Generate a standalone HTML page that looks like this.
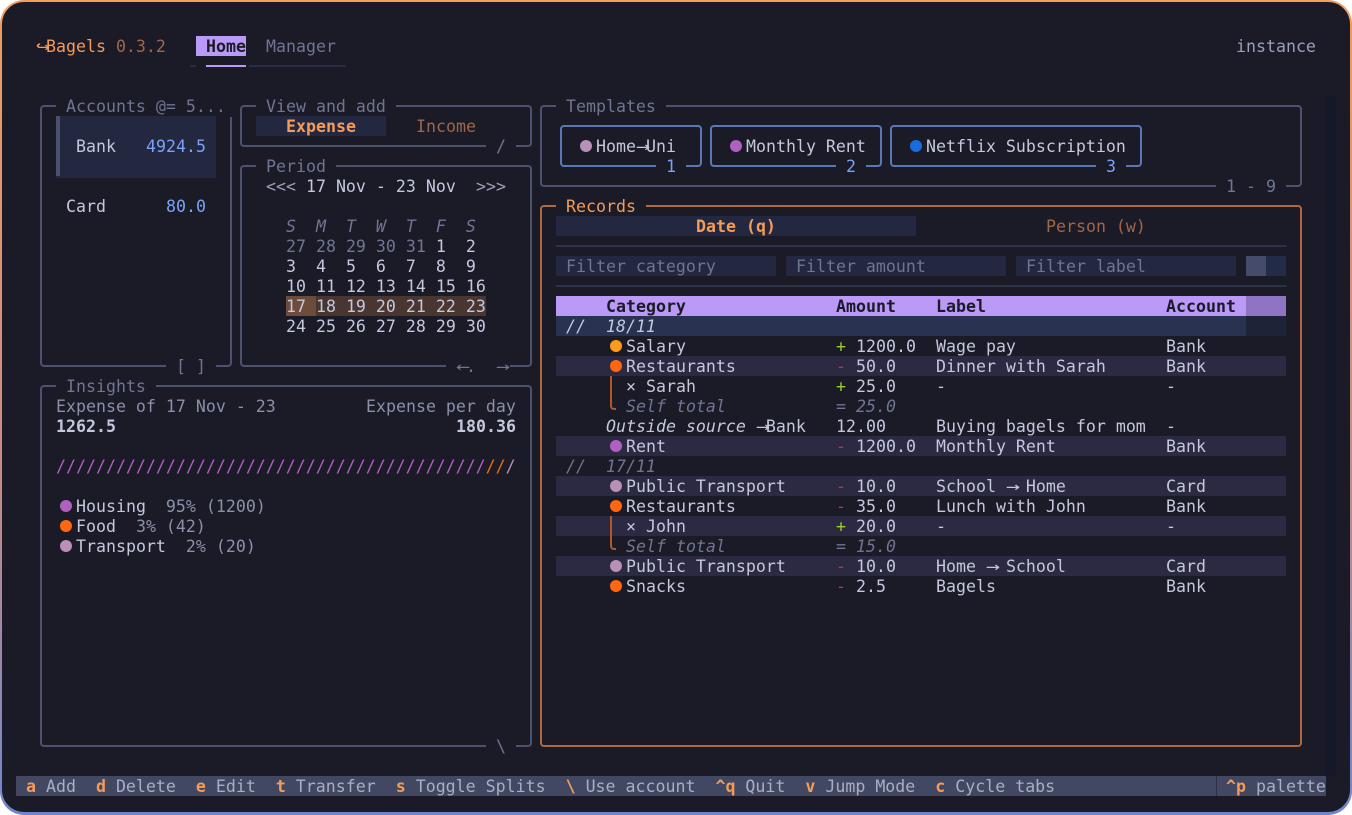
<!DOCTYPE html>
<html><head><meta charset="utf-8"><style>
*{margin:0;padding:0;box-sizing:border-box}
body{width:1352px;height:815px;background:#fff;overflow:hidden;position:relative;font-family:"DejaVu Sans Mono","Liberation Mono",monospace;font-size:16.6px;line-height:20px;color:#c3c8dc}
#win{position:absolute;left:0;top:0;width:1352px;height:815px;border-radius:24px;background:linear-gradient(#f39c5c,#c58a88 60%,#6f86cc)}
#in{position:absolute;left:2px;top:2px;right:2px;bottom:3px;border-radius:22px;background:#1b1b27}
.t{position:absolute;white-space:pre;height:20px;padding-top:1px}
.box{position:absolute;border:2px solid #4c5270;border-radius:4px}
.ob{border-color:#b0683e}
.lbl{position:absolute;white-space:pre;background:#1b1b27;padding:1px 10px 0;color:#6f7592}
.dim{color:#6f7592}
.or{color:#f49b5a}
.dor{color:#a0664a}
.bl{color:#7aa2f7}
.b{font-weight:bold}
.i{font-style:italic}
.bg{position:absolute}
.d{position:absolute;width:12px;height:12px;border-radius:50%}
.red{color:#d0285a}.grn{color:#9acd32}
.ar{display:inline-block;width:10px;transform:scaleX(1.4);transform-origin:left center}
</style></head><body>
<div id="win"></div><div id="in"></div>

<div class="t or" style="left:36px;top:36px"><span class="ar">↪</span>Bagels <span class="dor">0.3.2</span></div>
<div class="bg" style="left:196px;top:36px;width:50px;height:20px;background:#bb9af7"></div>
<div class="t b" style="left:206px;top:36px;color:#1b1b27">Home</div>
<div class="t dim" style="left:266px;top:36px">Manager</div>
<div class="bg" style="left:190px;top:65px;width:6px;height:2px;background:#2a2d40"></div>
<div class="bg" style="left:206px;top:65px;width:40px;height:2px;background:#bb9af7"></div>
<div class="bg" style="left:249px;top:65px;width:97px;height:2px;background:#2a2d40"></div>
<div class="t" style="left:1236px;top:36px;color:#9aa0b8">instance</div>

<div class="bg" style="left:1326px;top:96px;width:10px;height:680px;background:#151828"></div>

<div class="box" style="left:40px;top:105px;width:192px;height:262px"></div>
<div class="lbl" style="left:56px;top:96px">Accounts @= 5...</div>
<div class="bg" style="left:56px;top:116px;width:160px;height:62px;background:#232840"></div>
<div class="bg" style="left:56px;top:116px;width:4px;height:60px;background:#4a5070"></div>
<div class="t" style="left:76px;top:136px">Bank</div>
<div class="t bl" style="left:146px;top:136px">4924.5</div>
<div class="t" style="left:66px;top:196px">Card</div>
<div class="t bl" style="left:166px;top:196px">80.0</div>
<div class="lbl" style="left:166px;top:356px">[ ]</div>

<div class="box" style="left:240px;top:105px;width:292px;height:42px"></div>
<div class="lbl" style="left:256px;top:96px">View and add</div>
<div class="bg" style="left:256px;top:116px;width:130px;height:20px;background:#232840"></div>
<div class="t or b" style="left:286px;top:116px">Expense</div>
<div class="t dor" style="left:416px;top:116px">Income</div>
<div class="lbl" style="left:486px;top:136px">/</div>

<div class="box" style="left:240px;top:165px;width:292px;height:202px"></div>
<div class="lbl" style="left:256px;top:156px">Period</div>
<div class="t" style="left:266px;top:176px"><span style="color:#9aa0b8">&lt;&lt;&lt;</span> 17 Nov - 23 Nov</div>
<div class="t" style="left:476px;top:176px;color:#9aa0b8">&gt;&gt;&gt;</div>
<div class="t i dim" style="left:286px;top:216px">S  M  T  W  T  F  S</div>
<div class="t" style="left:286px;top:236px"><span class="dim">27 28 29 30 31</span> 1  2</div>
<div class="t" style="left:286px;top:256px">3  4  5  6  7  8  9</div>
<div class="t" style="left:286px;top:276px">10 11 12 13 14 15 16</div>
<div class="bg" style="left:286px;top:296px;width:200px;height:20px;background:#4a3630"></div>
<div class="bg" style="left:286px;top:296px;width:30px;height:20px;background:#6e4c3c"></div>
<div class="t" style="left:286px;top:296px">17 18 19 20 21 22 23</div>
<div class="t" style="left:286px;top:316px">24 25 26 27 28 29 30</div>
<div class="lbl" style="left:446px;top:356px;padding:1px 4px 0 10px"><span class="ar">←</span>. </div>
<div class="lbl" style="left:486px;top:356px;padding:1px 4px 0 10px"><span class="ar">→</span></div>

<div class="box" style="left:40px;top:385px;width:492px;height:362px"></div>
<div class="lbl" style="left:56px;top:376px">Insights</div>
<div class="t" style="left:56px;top:396px;color:#8a90a8">Expense of 17 Nov - 23</div>
<div class="t" style="left:366px;top:396px;color:#8a90a8">Expense per day</div>
<div class="t b" style="left:56px;top:416px">1262.5</div>
<div class="t b" style="left:456px;top:416px">180.36</div>
<div class="t" style="left:56px;top:456px;color:#b060c0">///////////////////////////////////////////<span style="color:#f06a10">//</span><span style="color:#b890b8">/</span></div>
<div class="d" style="left:60px;top:500px;background:#b060c0"></div>
<div class="t" style="left:76px;top:496px">Housing  <span style="color:#8a90a8">95% (1200)</span></div>
<div class="d" style="left:60px;top:520px;background:#ff6610"></div>
<div class="t" style="left:76px;top:516px">Food  <span style="color:#8a90a8">3% (42)</span></div>
<div class="d" style="left:60px;top:540px;background:#b890b8"></div>
<div class="t" style="left:76px;top:536px">Transport  <span style="color:#8a90a8">2% (20)</span></div>
<div class="lbl" style="left:486px;top:736px">\</div>

<div class="box" style="left:540px;top:105px;width:762px;height:82px"></div>
<div class="lbl" style="left:556px;top:96px">Templates</div>
<div class="box" style="left:560px;top:125px;width:142px;height:42px;border-color:#5a78b8"></div>
<div class="box" style="left:710px;top:125px;width:172px;height:42px;border-color:#5a78b8"></div>
<div class="box" style="left:890px;top:125px;width:252px;height:42px;border-color:#5a78b8"></div>
<div class="d" style="left:580px;top:140px;background:#b890b8"></div>
<div class="t" style="left:596px;top:136px">Home<span class="ar">→</span>Uni</div>
<div class="d" style="left:730px;top:140px;background:#b060c0"></div>
<div class="t" style="left:746px;top:136px">Monthly Rent</div>
<div class="d" style="left:910px;top:140px;background:#1a6ae0"></div>
<div class="t" style="left:926px;top:136px">Netflix Subscription</div>
<div class="lbl" style="left:656px;top:156px;color:#7aa2f7">1</div>
<div class="lbl" style="left:836px;top:156px;color:#7aa2f7">2</div>
<div class="lbl" style="left:1096px;top:156px;color:#7aa2f7">3</div>
<div class="lbl" style="left:1216px;top:176px">1 - 9</div>

<div class="box ob" style="left:540px;top:205px;width:762px;height:542px"></div>
<div class="lbl or" style="left:556px;top:196px;color:#f49b5a">Records</div>
<div class="bg" style="left:556px;top:216px;width:360px;height:20px;background:#232840"></div>
<div class="t or b" style="left:696px;top:216px">Date (q)</div>
<div class="t dor" style="left:1046px;top:216px">Person (w)</div>
<div class="bg" style="left:556px;top:245px;width:730px;height:2px;background:#2e3248"></div>
<div class="bg" style="left:556px;top:256px;width:220px;height:20px;background:#232840"></div>
<div class="bg" style="left:786px;top:256px;width:220px;height:20px;background:#232840"></div>
<div class="bg" style="left:1016px;top:256px;width:220px;height:20px;background:#232840"></div>
<div class="bg" style="left:1246px;top:256px;width:20px;height:20px;background:#454b6a"></div>
<div class="bg" style="left:1266px;top:256px;width:20px;height:20px;background:#222c48"></div>
<div class="t dim" style="left:566px;top:256px">Filter category</div>
<div class="t dim" style="left:796px;top:256px">Filter amount</div>
<div class="t dim" style="left:1026px;top:256px">Filter label</div>
<div class="bg" style="left:556px;top:285px;width:730px;height:2px;background:#2e3248"></div>
<div class="bg" style="left:556px;top:296px;width:690px;height:20px;background:#bb9af7"></div>
<div class="bg" style="left:1246px;top:296px;width:40px;height:20px;background:#8f74c4"></div>
<div class="t b" style="left:606px;top:296px;color:#1b1b27">Category</div>
<div class="t b" style="left:836px;top:296px;color:#1b1b27">Amount</div>
<div class="t b" style="left:936px;top:296px;color:#1b1b27">Label</div>
<div class="t b" style="left:1166px;top:296px;color:#1b1b27">Account</div>
<div class="bg" style="left:556px;top:316px;width:690px;height:20px;background:#293250"></div>
<div class="bg" style="left:1246px;top:316px;width:40px;height:20px;background:#1e2438"></div>
<div class="t i" style="left:566px;top:316px">//  18/11</div>

<div class="bg" style="left:556px;top:356px;width:730px;height:20px;background:#2b2a42"></div>
<div class="bg" style="left:556px;top:436px;width:730px;height:20px;background:#2b2a42"></div>
<div class="bg" style="left:556px;top:476px;width:730px;height:20px;background:#2b2a42"></div>
<div class="bg" style="left:556px;top:516px;width:730px;height:20px;background:#2b2a42"></div>
<div class="bg" style="left:556px;top:556px;width:730px;height:20px;background:#2b2a42"></div>

<div class="bg" style="left:610px;top:376px;width:6px;height:34px;border-left:2px solid #b0582a;border-bottom:2px solid #b0582a;border-bottom-left-radius:4px"></div>
<div class="bg" style="left:610px;top:516px;width:6px;height:34px;border-left:2px solid #b0582a;border-bottom:2px solid #b0582a;border-bottom-left-radius:4px"></div>

<div class="d" style="left:610px;top:340px;background:#ff9a1a"></div>
<div class="t" style="left:626px;top:336px">Salary</div>
<div class="t" style="left:836px;top:336px"><span class="grn">+</span> 1200.0</div>
<div class="t" style="left:936px;top:336px">Wage pay</div><div class="t" style="left:1166px;top:336px">Bank</div>

<div class="d" style="left:610px;top:360px;background:#ff6610"></div>
<div class="t" style="left:626px;top:356px">Restaurants</div>
<div class="t" style="left:836px;top:356px"><span class="red">-</span> 50.0</div>
<div class="t" style="left:936px;top:356px">Dinner with Sarah</div><div class="t" style="left:1166px;top:356px">Bank</div>

<div class="t" style="left:626px;top:376px">× Sarah</div>
<div class="t" style="left:836px;top:376px"><span class="grn">+</span> 25.0</div>
<div class="t" style="left:936px;top:376px">-</div><div class="t" style="left:1166px;top:376px">-</div>

<div class="t i dim" style="left:626px;top:396px">Self total</div>
<div class="t i dim" style="left:836px;top:396px">= 25.0</div>

<div class="t" style="left:606px;top:416px"><span class="i">Outside source</span> <span class="ar">→</span>Bank</div>
<div class="t" style="left:836px;top:416px">12.00</div>
<div class="t" style="left:936px;top:416px">Buying bagels for mom</div><div class="t" style="left:1166px;top:416px">-</div>

<div class="d" style="left:610px;top:440px;background:#b060c0"></div>
<div class="t" style="left:626px;top:436px">Rent</div>
<div class="t" style="left:836px;top:436px"><span class="red">-</span> 1200.0</div>
<div class="t" style="left:936px;top:436px">Monthly Rent</div><div class="t" style="left:1166px;top:436px">Bank</div>

<div class="t i dim" style="left:566px;top:456px">//  17/11</div>

<div class="d" style="left:610px;top:480px;background:#b890b8"></div>
<div class="t" style="left:626px;top:476px">Public Transport</div>
<div class="t" style="left:836px;top:476px"><span class="red">-</span> 10.0</div>
<div class="t" style="left:936px;top:476px">School <span class="ar">→</span> Home</div><div class="t" style="left:1166px;top:476px">Card</div>

<div class="d" style="left:610px;top:500px;background:#ff6610"></div>
<div class="t" style="left:626px;top:496px">Restaurants</div>
<div class="t" style="left:836px;top:496px"><span class="red">-</span> 35.0</div>
<div class="t" style="left:936px;top:496px">Lunch with John</div><div class="t" style="left:1166px;top:496px">Bank</div>

<div class="t" style="left:626px;top:516px">× John</div>
<div class="t" style="left:836px;top:516px"><span class="grn">+</span> 20.0</div>
<div class="t" style="left:936px;top:516px">-</div><div class="t" style="left:1166px;top:516px">-</div>

<div class="t i dim" style="left:626px;top:536px">Self total</div>
<div class="t i dim" style="left:836px;top:536px">= 15.0</div>

<div class="d" style="left:610px;top:560px;background:#b890b8"></div>
<div class="t" style="left:626px;top:556px">Public Transport</div>
<div class="t" style="left:836px;top:556px"><span class="red">-</span> 10.0</div>
<div class="t" style="left:936px;top:556px">Home <span class="ar">→</span> School</div><div class="t" style="left:1166px;top:556px">Card</div>

<div class="d" style="left:610px;top:580px;background:#ff6610"></div>
<div class="t" style="left:626px;top:576px">Snacks</div>
<div class="t" style="left:836px;top:576px"><span class="red">-</span> 2.5</div>
<div class="t" style="left:936px;top:576px">Bagels</div><div class="t" style="left:1166px;top:576px">Bank</div>

<div class="bg" style="left:16px;top:776px;width:1310px;height:20px;background:#434862"></div>
<div class="bg" style="left:1216px;top:776px;width:1px;height:20px;background:#2e3248"></div>
<div class="t" style="left:26px;top:776px;color:#a8aec4"><span class="or b">a</span> Add  <span class="or b">d</span> Delete  <span class="or b">e</span> Edit  <span class="or b">t</span> Transfer  <span class="or b">s</span> Toggle Splits  <span class="or b">\</span> Use account  <span class="or b">^q</span> Quit  <span class="or b">v</span> Jump Mode  <span class="or b">c</span> Cycle tabs</div>
<div class="t" style="left:1226px;top:776px;color:#a8aec4"><span class="or b">^p</span> palette</div>
</body></html>
